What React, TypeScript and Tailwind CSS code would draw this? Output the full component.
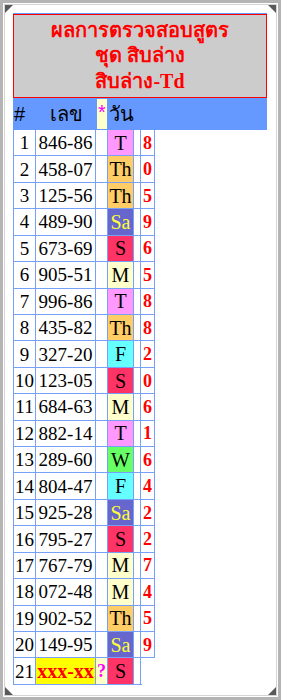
import React from "react";

type Row = { n: number; num: string; day: string; d: string };

const rows: Row[] = [
  { n: 1, num: "846-86", day: "T", d: "8" },
  { n: 2, num: "458-07", day: "Th", d: "0" },
  { n: 3, num: "125-56", day: "Th", d: "5" },
  { n: 4, num: "489-90", day: "Sa", d: "9" },
  { n: 5, num: "673-69", day: "S", d: "6" },
  { n: 6, num: "905-51", day: "M", d: "5" },
  { n: 7, num: "996-86", day: "T", d: "8" },
  { n: 8, num: "435-82", day: "Th", d: "8" },
  { n: 9, num: "327-20", day: "F", d: "2" },
  { n: 10, num: "123-05", day: "S", d: "0" },
  { n: 11, num: "684-63", day: "M", d: "6" },
  { n: 12, num: "882-14", day: "T", d: "1" },
  { n: 13, num: "289-60", day: "W", d: "6" },
  { n: 14, num: "804-47", day: "F", d: "4" },
  { n: 15, num: "925-28", day: "Sa", d: "2" },
  { n: 16, num: "795-27", day: "S", d: "2" },
  { n: 17, num: "767-79", day: "M", d: "7" },
  { n: 18, num: "072-48", day: "M", d: "4" },
  { n: 19, num: "902-52", day: "Th", d: "5" },
  { n: 20, num: "149-95", day: "Sa", d: "9" },
];

const dayClass: Record<string, string> = {
  T: "bg-[#ff99ff] text-black",
  Th: "bg-[#ffcc66] text-black",
  Sa: "bg-[#6666cc] text-[#ffff33]",
  S: "bg-[#ff3366] text-black",
  M: "bg-[#ffffcc] text-black",
  F: "bg-[#66ffff] text-black",
  W: "bg-[#66ff66] text-black",
};

const serif = { fontFamily: '"Liberation Serif", "Times New Roman", serif' };

function Corner({ pos }: { pos: "tl" | "tr" | "bl" | "br" }) {
  const place =
    pos === "tl"
      ? "top-0 left-0"
      : pos === "tr"
      ? "top-0 right-0"
      : pos === "bl"
      ? "bottom-0 left-0"
      : "bottom-0 right-0";
  const pts =
    pos === "tl"
      ? "0,0 8,0 0,8"
      : pos === "tr"
      ? "0,0 8,0 8,8"
      : pos === "bl"
      ? "0,0 0,8 8,8"
      : "8,0 8,8 0,8";
  return (
    <svg className={`absolute ${place}`} width="8" height="8" viewBox="0 0 8 8">
      <polygon points={pts} fill="#5a5a5a" />
    </svg>
  );
}

export default function App() {
  return (
    <div className="w-[281px] h-[700px] border-[3px] border-[#b4b4b4] bg-white p-[1px] box-border">
      <div className="relative h-full border border-[#d4d4d4] bg-white pt-[8px] pl-[8px] pr-[7px]">
        <Corner pos="tl" />
        <Corner pos="tr" />
        <Corner pos="bl" />
        <Corner pos="br" />
        <div className="w-[254px]">
          {/* title */}
          <div className="border-t border-[#6699ff]">
            <div
              className="h-[84px] border border-[#ff0000] bg-[#cccccc] flex flex-col items-center justify-center text-[#ff0000] font-bold text-[20px] leading-[25.5px]"
              style={serif}
            >
              <div>ผลการตรวจสอบสูตร</div>
              <div>ชุด สิบล่าง</div>
              <div>สิบล่าง-Td</div>
            </div>
          </div>
          {/* blue header */}
          <div
            className="h-[32px] bg-[#6699ff] flex items-center text-black text-[20px]"
            style={{ fontFamily: '"Liberation Sans", Arial, sans-serif' }}
          >
            <div className="w-[23px] pl-[1px] self-center">#</div>
            <div className="w-[60px] text-center">เลข</div>
            <div className="w-[12px] h-full py-[1px] pl-[1px]">
              <div className="h-full w-[10px] bg-[#ffffcc] text-[#ff00ff] text-[20px] leading-[26px] text-center">*</div>
            </div>
            <div className="pl-[1px]">วัน</div>
          </div>
          {/* rows */}
          <div className="w-[142px] border-l border-[#77a0f8]" style={serif}>
            {rows.map((r) => (
              <div key={r.n} className="flex h-[26.43px] border-b border-[#77a0f8] text-[19px] leading-none">
                <div className="w-[22px] border-r border-[#77a0f8] flex items-center justify-center">{r.n}</div>
                <div className="w-[60px] border-r border-[#77a0f8] flex items-center justify-center">{r.num}</div>
                <div className="w-[12px] border-r border-[#77a0f8]"></div>
                <div className={`w-[26px] border-r border-[#77a0f8] flex items-center justify-center text-[20px] ${dayClass[r.day]}`}>
                  {r.day}
                </div>
                <div className="w-[7px] border-r border-[#77a0f8]"></div>
                <div className="w-[14px] border-r border-[#77a0f8] flex items-center justify-center text-[#ff0000] font-bold text-[18px]">
                  {r.d}
                </div>
              </div>
            ))}
            <div className="flex h-[26.43px] border-b border-[#77a0f8] text-[19px] leading-none w-[128px]">
              <div className="w-[22px] border-r border-[#77a0f8] flex items-center justify-center">21</div>
              <div className="w-[60px] border-r border-[#77a0f8] flex items-center justify-center bg-[#ffff00] text-[#ff0000] font-bold text-[20px]">
                xxx-xx
              </div>
              <div className="w-[12px] border-r border-[#77a0f8] flex items-center justify-center bg-[#ffffcc] text-[#ff00ff] font-bold text-[18px]">
                ?
              </div>
              <div className={`w-[26px] border-r border-[#77a0f8] flex items-center justify-center text-[20px] ${dayClass["S"]}`}>S</div>
              <div className="w-[7px] border-r border-[#77a0f8]"></div>
            </div>
          </div>
        </div>
      </div>
    </div>
  );
}
